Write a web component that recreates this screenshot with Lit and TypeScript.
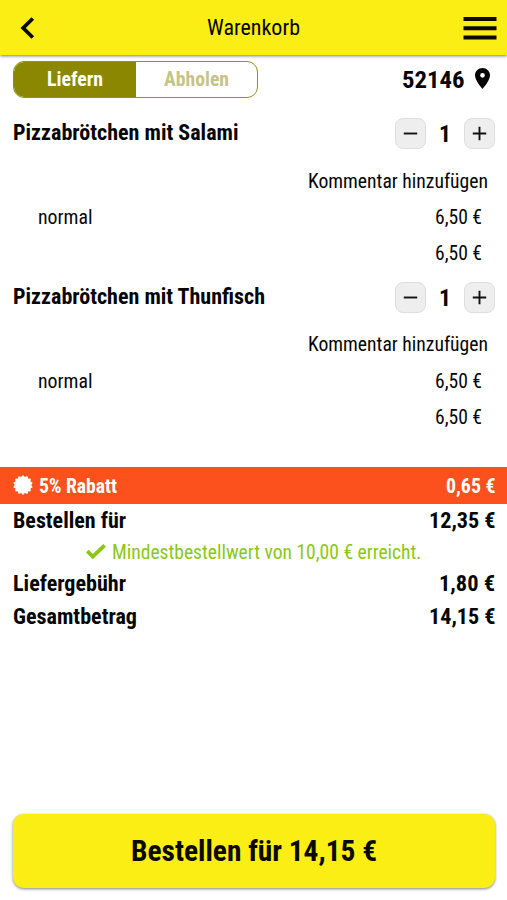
import { LitElement, html, svg, css } from "lit";
import { customElement, property } from "lit/decorators.js";

/* Single line of condensed type, set to a given measure. */
@customElement("set-line")
class SetLine extends LitElement {
  @property() text = "";
  @property({ type: Number }) measure = 0;
  @property({ type: Number }) size = 20.4;

  static styles = css`
    :host { display: block; flex: none; height: 24px; }
    svg { display: block; overflow: visible; }
    text { fill: currentColor; font-family: "Roboto Condensed", Roboto, "Liberation Sans", sans-serif; font-stretch: 75%; }
  `;

  render() {
    const baseline = Math.max(19.9, 12 + this.size * 0.36);
    return html`<svg width=${this.measure} height="24">
      ${svg`<text x="0" y=${baseline} font-size=${this.size} textLength=${this.measure} lengthAdjust="spacingAndGlyphs">${this.text}</text>`}
    </svg>`;
  }
}

const line = (text: string, measure: number, size = 20.4) =>
  html`<set-line .text=${text} .measure=${measure} .size=${size}></set-line>`;

const items = [
  { name: "Pizzabrötchen mit Salami", measure: 225.5 },
  { name: "Pizzabrötchen mit Thunfisch", measure: 252 },
];

const seal = Array.from({ length: 28 }, (_, i) => {
  const r = i % 2 ? 8.3 : 10;
  const a = (i * Math.PI) / 14;
  return `${(10 + r * Math.sin(a)).toFixed(2)},${(10 - r * Math.cos(a)).toFixed(2)}`;
}).join(" ");

@customElement("app-root")
class AppRoot extends LitElement {
  static styles = css`
    :host {
      display: flex; flex-direction: column; box-sizing: border-box;
      width: 507px; height: 900px; overflow: hidden;
      background: #fff; color: #050505;
      font-family: Roboto, "Liberation Sans", sans-serif;
    }
    * { box-sizing: border-box; }
    svg { display: block; flex: none; }
    header {
      height: 54.5px; flex: none; display: grid; grid-template-columns: 1fr auto 1fr;
      align-items: center; padding: 0 10px 0 20px; background: #faee14;
      box-shadow: 0 1px 3px rgba(0, 0, 0, 0.55);
    }
    .title { margin-right: 10.5px; }
    .menu { justify-self: end; margin-top: 2px; }
    .back { margin-top: 1px; }
    .row { display: flex; flex: none; align-items: center; justify-content: space-between; padding: 0 12px 0 13px; }
    .mode { height: 49px; }
    .switch {
      display: flex; width: 245px; height: 37px; border: 1.5px solid #93911f;
      border-radius: 11px; overflow: hidden; font-weight: 700;
    }
    .choice { flex: 1; display: flex; align-items: center; justify-content: center; padding-bottom: 2.5px; color: #c5c488; }
    .choice.on { background: #8c8700; color: #fffff4; }
    .place { display: flex; align-items: center; gap: 10.5px; padding: 0 5px 1px 0; font-weight: 700; }
    .head { height: 60px; }
    .name { padding-bottom: 3px; font-weight: 700; }
    .stepper { display: flex; align-items: center; gap: 13px; font-weight: 700; }
    .count { padding-bottom: 1px; }
    .step {
      display: flex; align-items: center; justify-content: center; width: 31px; height: 31px;
      padding: 0; border: 1px solid #dedede; border-radius: 8px; background: #eee;
    }
    .note { height: 35px; padding-bottom: 2.4px; padding-right: 19px; justify-content: flex-end; }
    .option { height: 36px; padding: 0 25px 1px 37.5px; }
    .sum { height: 32.5px; padding: 2.6px 25px 0 0; justify-content: flex-end; }
    .rebate { height: 36.5px; margin-top: 36.5px; background: #fc511c; color: #fff; font-weight: 700; }
    .tag { display: flex; align-items: center; gap: 6px; }
    .subtotal { height: 33.5px; font-weight: 700; }
    .minimum { height: 29.5px; padding-left: 12px; padding-bottom: 1px; justify-content: center; gap: 5.5px; color: #8ac814; }
    .fee { height: 32.5px; font-weight: 700; }
    .total { height: 33px; font-weight: 700; }
    .order {
      display: flex; align-items: center; justify-content: center; flex: none;
      height: 74px; margin: auto 12px 12px 13px; padding: 0 0 2px; border: 0; border-radius: 11px;
      background: #faee14; color: #0a0a00; font-weight: 700;
      box-shadow: 0 1px 3px rgba(0, 0, 0, 0.5);
    }
  `;

  item(name: string, measure: number) {
    return html`
      <div class="row head">
        <div class="name">${line(name, measure, 22.2)}</div>
        <div class="stepper">
          <button class="step"><svg width="15" height="15" viewBox="0 0 15 15"><path d="M0.8 7.5H14.2" stroke="#111" stroke-width="1.9" /></svg></button>
          <div class="count">${line("1", 12, 23.8)}</div>
          <button class="step"><svg width="15" height="15" viewBox="0 0 15 15"><path d="M0.8 7.5H14.2M7.5 0.8V14.2" stroke="#111" stroke-width="1.9" /></svg></button>
        </div>
      </div>
      <div class="row note">${line("Kommentar hinzufügen", 180)}</div>
      <div class="row option">${line("normal", 54.5)}${line("6,50 €", 47)}</div>
      <div class="row sum">${line("6,50 €", 47)}</div>
    `;
  }

  render() {
    return html`
      <header>
        <svg class="back" width="15" height="22" viewBox="0 0 15 22"><path d="M12.8 1.5L3.2 11L12.8 20.5" fill="none" stroke="#0a0a00" stroke-width="3.8" /></svg>
        <div class="title">${line("Warenkorb", 93, 21.9)}</div>
        <svg class="menu" width="34" height="23" viewBox="0 0 34 23"><path d="M0.5 2H33.5M0.5 11.3H33.5M0.5 20.5H33.5" stroke="#0a0a00" stroke-width="4" /></svg>
      </header>
      <div class="row mode">
        <div class="switch">
          <div class="choice on">${line("Liefern", 56)}</div>
          <div class="choice">${line("Abholen", 65)}</div>
        </div>
        <div class="place">
          ${line("52146", 62.5, 24.5)}
          <svg width="15" height="21" viewBox="5 2 14 20" preserveAspectRatio="none"><path fill-rule="evenodd" d="M12 2C8.13 2 5 5.13 5 9c0 5.25 7 13 7 13s7-7.75 7-13c0-3.87-3.13-7-7-7zm0 9.2a2.2 2.2 0 1 1 0-4.4 2.2 2.2 0 0 1 0 4.4z" fill="#050505" /></svg>
        </div>
      </div>
      ${items.map((i) => this.item(i.name, i.measure))}
      <div class="row rebate">
        <div class="tag">
          <svg width="20" height="20" viewBox="0 0 20 20"><polygon points=${seal} fill="#fff" /></svg>
          ${line("5% Rabatt", 78)}
        </div>
        ${line("0,65 €", 49.5)}
      </div>
      <div class="row subtotal">${line("Bestellen für", 113, 22.4)}${line("12,35 €", 66.5, 22.4)}</div>
      <div class="row minimum">
        <svg width="20" height="15" viewBox="0 0 20 15"><path d="M1.3 7.2L6.8 12.6L18.6 1.3" fill="none" stroke="#8ac814" stroke-width="3.8" /></svg>
        ${line("Mindestbestellwert von 10,00 € erreicht.", 309.5)}
      </div>
      <div class="row fee">${line("Liefergebühr", 113, 22.4)}${line("1,80 €", 56, 22.4)}</div>
      <div class="row total">${line("Gesamtbetrag", 124, 22.4)}${line("14,15 €", 66.5, 22.4)}</div>
      <button class="order">${line("Bestellen für 14,15 €", 246, 30)}</button>
    `;
  }
}
